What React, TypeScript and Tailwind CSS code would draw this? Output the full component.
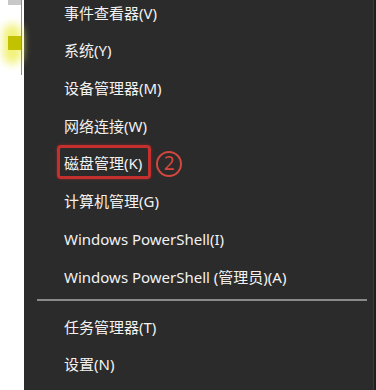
const items = [
	'事件查看器(V)',
	'系统(Y)',
	'设备管理器(M)',
	'网络连接(W)',
	'磁盘管理(K)',
	'计算机管理(G)',
	'Windows PowerShell(I)',
	'Windows PowerShell (管理员)(A)'
]

const bottomItems = ['任务管理器(T)', '设置(N)']

function MenuRow({ label, marked = false }: { label: string; marked?: boolean }) {
	return (
		<li className="flex h-[37.75px] items-center pl-[40px]">
			{marked ? (
				<>
					<span className="-ml-[7px] -mt-[3px] flex h-[34px] items-center rounded-[4px] border-[3px] border-[#c4302e] pl-[4px] pr-[6px] pt-[1px] shadow-[0_0_3px_rgba(200,40,40,0.6)]">
						{label}
					</span>
					<span className="ml-[5px] flex h-[26px] w-[26px] items-center justify-center rounded-full border-2 border-[#d2473e] text-[19px] leading-none text-[#d2473e]">
						2
					</span>
				</>
			) : (
				<span>{label}</span>
			)}
		</li>
	)
}

export default function App() {
	return (
		<div className="flex h-[390px] w-[376px] overflow-hidden bg-white font-['Noto_Sans','Noto_Sans_CJK_SC',sans-serif]">
			{/* //! desktop strip on the left */}
			<div className="relative w-[24px] shrink-0 bg-white">
				<div className="absolute left-[8px] top-0 h-[5px] w-[14px] bg-[#c8c8c8]" />
				<div className="absolute left-[3px] top-[24px] h-[40px] w-[19px] rounded-full bg-[#f2f27a] blur-[4px]" />
				<div className="absolute left-[8px] top-[36px] h-[14px] w-[14px] bg-[#c2c200]" />
				<div className="absolute left-[21px] top-0 h-[75px] w-px bg-[#8c8c8c]" />
			</div>
			{/* //! context menu */}
			<div className="flex flex-1 bg-[#2b2b2b]">
				<div className="flex-1 text-[15px] text-[#f2f2f2]">
					<ul className="-mt-[6px]">
						{items.map((label) => (
							<MenuRow key={label} label={label} marked={label === '磁盘管理(K)'} />
						))}
					</ul>
					<div className="flex h-[12px] items-start pl-[13px] pr-[6px] pt-[3px]">
						<div className="h-[2px] w-full bg-[#8a8a8a]" />
					</div>
					<ul>
						{bottomItems.map((label) => (
							<MenuRow key={label} label={label} />
						))}
					</ul>
				</div>
				<div className="w-[3px] border-l border-[#3a3a3a] bg-[#1e1e1e]" />
			</div>
		</div>
	)
}
